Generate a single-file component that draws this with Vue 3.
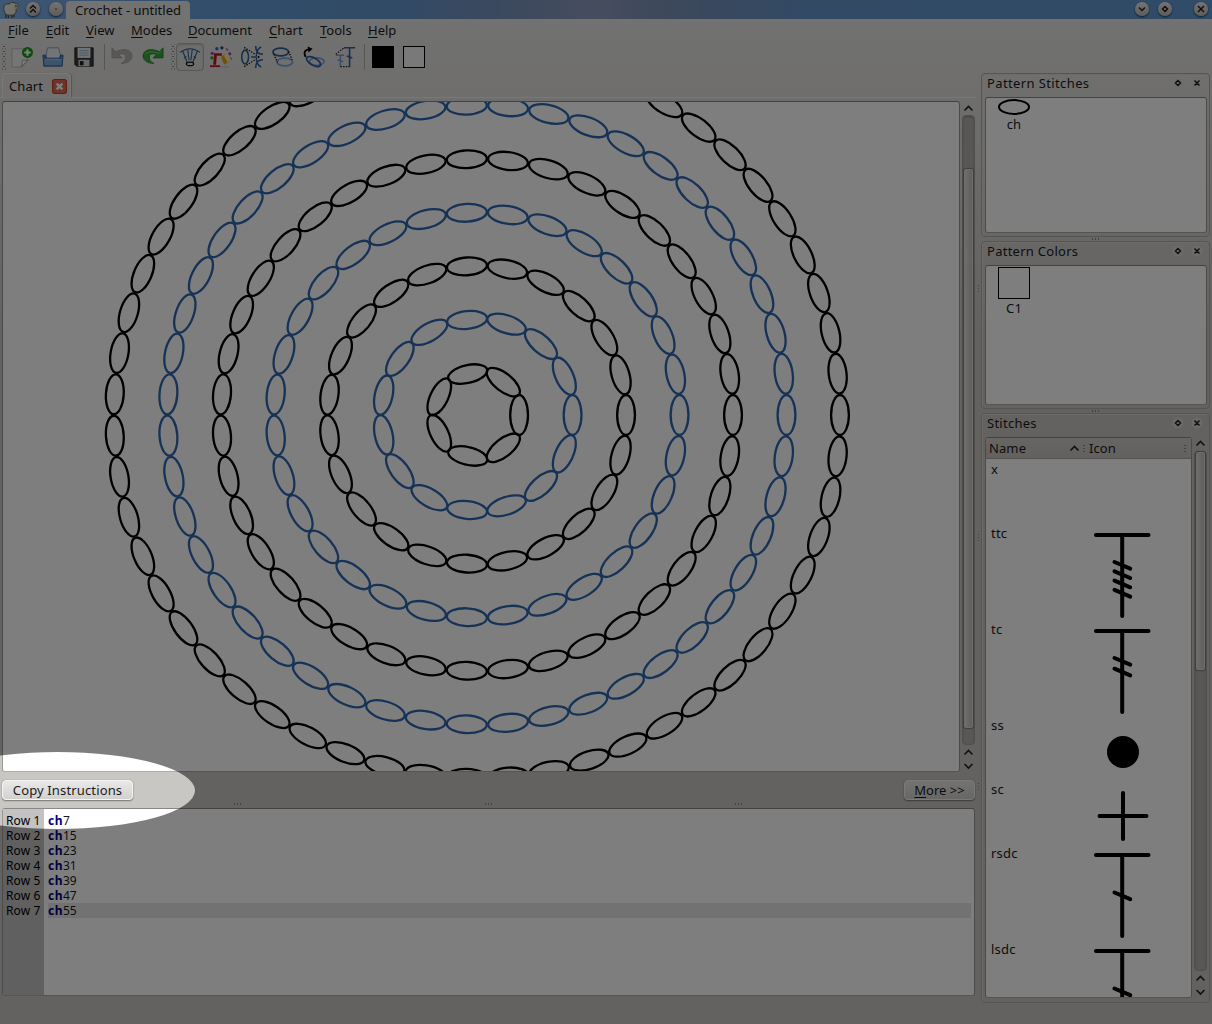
<script setup>
const menus = [
  { t: 'File', x: 22 }, { t: 'Edit', x: 24 }, { t: 'View', x: 29 }, { t: 'Modes', x: 41 },
  { t: 'Document', x: 65 }, { t: 'Chart', x: 35 }, { t: 'Tools', x: 32 }, { t: 'Help', x: 29 }
]
const rows = [7, 15, 23, 31, 39, 47, 55]
const rings = rows.map((n, i) => ({
  color: i % 2 ? '#2e68b0' : '#000',
  items: Array.from({ length: n }, (_, k) => ({ a: (k * 360) / n, r: 42 + i * 53.48 }))
}))
const stitches = [
  { name: 'x', h: 64, kind: 'none' },
  { name: 'ttc', h: 96, kind: 'T', ticks: [39, 48.3, 57.6, 66.9] },
  { name: 'tc', h: 96, kind: 'T', ticks: [39, 49.7] },
  { name: 'ss', h: 64, kind: 'dot' },
  { name: 'sc', h: 64, kind: 'plus' },
  { name: 'rsdc', h: 96, kind: 'T', ticks: [49.5] },
  { name: 'lsdc', h: 96, kind: 'T', ticks: [49.5] }
]
const paint = [[2, 13, '#3a9a3a'], [2.5, 8, '#a03fc0'], [7.5, 3, '#3a62c8'], [13, 2, '#2a3f9a'], [18, 4, '#a86fc8'], [21.5, 8.5, '#a03fc0'], [22.2, 14, '#8a9a3a']]
</script>

<template>
  <div class="window">
    <header class="title">
      <svg class="sheep" width="18" height="19" viewBox="0 0 18 19">
        <path d="M4 13v5M6.500 13v5M10 13v5M12 12v5" stroke="#5b5148" stroke-width="1.400" />
        <path d="M2 6q1-3 5-2 2-3 6-1 4 0 3 4-1 2-2 2 1 5-3 6-7 1-8-2-2-3-1-7z" fill="#e8e4da" stroke="#6e675e" />
        <path d="M13 4l3 2-1 3-3-1z" fill="#d8cdbb" /><circle cx="14" cy="6" r=".8" fill="#333" />
      </svg>
      <span class="orb o1"><svg width="14" height="14" viewBox="0 0 14 14"><path d="M4 6.500l3-3 3 3M4 10.500l3-3 3 3" /></svg></span>
      <span class="orb o2"><svg width="14" height="14" viewBox="0 0 14 14"><circle cx="7" cy="7" r=".2" /></svg></span>
      <span class="caption"><span>Crochet - untitled</span></span>
      <span class="grow"></span>
      <span class="orb"><svg width="14" height="14" viewBox="0 0 14 14"><path d="M4 5.500l3 3 3-3" /></svg></span>
      <span class="orb o4"><svg width="14" height="14" viewBox="0 0 14 14"><path d="M7 4.500L9.500 7 7 9.500 4.500 7z" /></svg></span>
      <span class="orb o5"><svg width="14" height="14" viewBox="0 0 14 14"><path d="M4 4l6 6M10 4l-6 6" /></svg></span>
    </header>

    <nav class="menu">
      <span v-for="m in menus" :key="m.t" :style="{ width: m.x + 'px' }"><u>{{ m.t[0] }}</u>{{ m.t.slice(1) }}</span>
    </nav>

    <div class="tools">
      <i class="handle"></i>
      <svg class="ic" viewBox="0 0 24 24">
        <path d="M1 3h17v13l-6 7H1z" fill="#ececec" stroke="#bbb" /><path d="M11.500 22.500l1-7h6z" fill="#fff" stroke="#888" stroke-width=".8" />
        <circle cx="18" cy="7" r="6" fill="#1c9a1c" /><path d="M18 3.500v7M14.500 7h7" stroke="#fff" stroke-width="2.200" />
      </svg>
      <svg class="ic" viewBox="0 0 24 24">
        <path d="M4 13L6 2h12l3 11z" fill="#e9eef5" stroke="#8496ad" /><path d="M1 10h3l1 4h14l1-4h3l-1 12H2z" fill="#4a7dbd" stroke="#2f609e" />
        <path d="M2 14h20l-1 7H3z" fill="#7ba6dc" /><path d="M4 15h16" stroke="#a8c8ee" />
      </svg>
      <svg class="ic" viewBox="0 0 24 24">
        <path d="M2 2h20v20H4l-2-2z" fill="#3c3c3e" stroke="#242424" /><path d="M5 2h14v11H5z" fill="#e6eaee" />
        <path d="M7 5h10M7 7.500h10M7 10h10" stroke="#8dafd0" /><path d="M6 15h12v7H6z" fill="#d3d3d3" /><path d="M7.500 16.500h4V21h-4z" fill="#222" />
      </svg>
      <i class="sep"></i>
      <svg class="ic undo" viewBox="0 0 24 24">
        <path d="M1 2v11h11L8 9q9-2 8 4 0 4-5 6 11 0 12-8Q22 3 12 4L5 6z" fill="#b4b3b0" stroke="#92918e" stroke-width=".7" />
      </svg>
      <svg class="ic redo" viewBox="0 0 24 24">
        <path d="M23 2v11H12l4-4Q7 7 8 13q0 4 5 6Q2 19 1 11 2 3 12 4l7 2z" fill="#38a83b" stroke="#167a22" stroke-width=".8" />
        <path d="M3 10q3-6 15-2l3-3" fill="none" stroke="#79d06e" />
      </svg>
      <i class="handle h2"></i>
      <span class="active"><svg class="ic" viewBox="0 0 24 24">
        <g fill="none" stroke="#2e5f9e" stroke-width="1.200"><path d="M1 7q11-8 22 0M4 5.500L9 18M20 5.500L15 18M9.500 3.500l1.500 12M14.500 3.500l-1.500 12M5.500 13l2.500-1.500M16 11.500l2.500 1.500" /></g>
        <ellipse cx="12" cy="19.500" rx="4" ry="2" fill="none" stroke="#111" stroke-width="1.300" />
      </svg></span>
      <svg class="ic paint" viewBox="0 0 24 24">
        <circle v-for="(p, i) in paint" :key="i" :cx="p[0]" :cy="p[1]" r="1.800" :fill="p[2]" />
        <path d="M8 9l9-6.500 6.500 13.500-9 6.500-6-3z" fill="#ece7dd" />
        <path d="M12 12l5-3.500 4.500 8-6 4z" fill="#e2a41a" /><path d="M15.200 10.300l2.200-1.500 4 7.200-2.200 1.500z" fill="#fff0b0" />
        <path d="M4.500 8h8.500v2.500H7.500l-1 10h-3z" fill="#b81c1c" />
        <path d="M0 22h11" stroke="#b81c1c" stroke-width="2" /><path d="M12 22.800h9" stroke="#bbb" />
      </svg>
      <svg class="ic" viewBox="0 0 24 24">
        <g fill="none" stroke="#2e5f9e" stroke-width="1.700"><ellipse cx="4.500" cy="12" rx="3.700" ry="7.500" /><path d="M16 0q0 9 8 9M24 15q-8 0-8 9M11 12h7M22 1q-5 3-5 8M22 23q-5-3-5-8" /></g>
        <path d="M3.500 1.500L20 12M3.500 22.500L20 12" fill="none" stroke="#111" stroke-width="1.400" stroke-dasharray="1.500 1.500" />
      </svg>
      <svg class="ic" viewBox="0 0 24 24">
        <g fill="none" stroke-width="1.900"><ellipse cx="14" cy="17.500" rx="8.500" ry="4.300" stroke="#79a4dc" /><ellipse cx="9.500" cy="6.500" rx="8.500" ry="4.300" stroke="#2e5f9e" /></g>
        <path d="M2 9l4 9M18 6l4 9" stroke="#111" stroke-width="1.500" stroke-dasharray="1.500 1.500" />
      </svg>
      <svg class="ic" viewBox="0 0 24 24">
        <g fill="none" stroke-width="1.900"><ellipse cx="15" cy="17" rx="8" ry="4" stroke="#79a4dc" /><ellipse cx="11.500" cy="17" rx="8.500" ry="4" transform="rotate(30 11.5 17)" stroke="#2e5f9e" /></g>
        <path d="M3 12Q-1 5 7 3.500" fill="none" stroke="#000" stroke-width="2" /><path d="M5 .5l5.500 2.500L6 7z" />
      </svg>
      <svg class="ic" viewBox="0 0 24 24">
        <g fill="none"><path d="M7 23V10M2 10h9M4 15l6 2" stroke="#6f9cd8" stroke-width="1.600" /><path d="M17 23V2M11 2h12M14 11l6 2" stroke="#2e5f9e" stroke-width="1.700" />
          <path d="M2 9l9-7M7 22.500h10" stroke="#111" stroke-width="1.300" stroke-dasharray="1.500 1.500" /></g>
      </svg>
      <i class="sep s2"></i>
      <b class="swatch black"></b><b class="swatch"></b>
    </div>

    <div class="body">
      <main class="left">
        <div class="tabs">
          <div class="tab">Chart<svg width="15" height="15" viewBox="0 0 14 14"><rect x=".5" y=".5" width="13" height="13" rx="2" fill="#dd6a50" stroke="#c23b27" /><path d="M4.300 4.300l5.400 5.400M9.700 4.300l-5.400 5.400" stroke="#fff" stroke-width="2.200" /></svg></div>
        </div>
        <div class="chartrow">
          <div class="canvas frame">
            <svg width="956" height="669" viewBox="3 102 956 669">
              <g v-for="(g, i) in rings" :key="i" :stroke="g.color" fill="none" stroke-width="2.300">
                <ellipse v-for="(e, k) in g.items" :key="k" :cx="477.100 + e.r" cy="415" rx="8.900" ry="20" :transform="`rotate(${e.a} 477.1 415)`" />
              </g>
            </svg>
          </div>
          <div class="scroll">
            <svg class="arr" width="13" height="14" viewBox="0 0 13 14"><path d="M2.500 9.500l4-4 4 4" /></svg>
            <div class="track"><div class="thumb t1"></div></div>
            <svg class="arr" width="13" height="14" viewBox="0 0 13 14"><path d="M2.500 9.500l4-4 4 4" /></svg>
            <svg class="arr" width="13" height="14" viewBox="0 0 13 14"><path d="M2.500 5l4 4 4-4" /></svg>
          </div>
        </div>
        <div class="buttons"><button class="copy">Copy Instructions</button><button class="more"><span><u>M</u>ore &gt;&gt;</span></button></div>
        <div class="split"><i></i><i></i><i></i></div>
        <div class="editor frame">
          <div class="gutter"><div v-for="(n, i) in rows" :key="n">Row {{ i + 1 }}</div></div>
          <div class="code"><div v-for="(n, i) in rows" :key="n" :class="{ current: i === 6 }"><b>ch</b><span>{{ n }}</span></div></div>
        </div>
      </main>

      <div class="vsplit"><i></i><i></i><i></i></div>

      <aside class="right">
        <section class="dock d1">
          <div class="dt"><span class="w102">Pattern Stitches</span><svg width="36" height="14" viewBox="0 0 36 14"><circle cx="8" cy="7" r="5.500" /><circle cx="27" cy="7" r="5.500" /><path d="M8 4.500L10.500 7 8 9.500 5.500 7zM24.500 4.500l5 5M29.500 4.500l-5 5" /></svg></div>
          <div class="box frame"><div class="cell"><svg width="34" height="18" viewBox="0 0 34 18"><ellipse cx="17" cy="9" rx="15" ry="6.900" fill="none" stroke="#000" stroke-width="2" /></svg><span>ch</span></div></div>
        </section>
        <div class="hs"><i></i></div>
        <section class="dock d2">
          <div class="dt"><span class="w91">Pattern Colors</span><svg width="36" height="14" viewBox="0 0 36 14"><circle cx="8" cy="7" r="5.500" /><circle cx="27" cy="7" r="5.500" /><path d="M8 4.500L10.500 7 8 9.500 5.500 7zM24.500 4.500l5 5M29.500 4.500l-5 5" /></svg></div>
          <div class="box frame"><div class="cell"><div class="c1"></div><span>C1</span></div></div>
        </section>
        <div class="hs"><i></i></div>
        <section class="dock d3">
          <div class="dt"><span class="w91">Stitches</span><svg width="36" height="14" viewBox="0 0 36 14"><circle cx="8" cy="7" r="5.500" /><circle cx="27" cy="7" r="5.500" /><path d="M8 4.500L10.500 7 8 9.500 5.500 7zM24.500 4.500l5 5M29.500 4.500l-5 5" /></svg></div>
          <div class="lrow">
            <div class="list frame">
              <div class="head"><span class="hn">Name</span><svg class="arr" width="13" height="14" viewBox="0 0 13 14"><path d="M2.500 9.500l4-4 4 4" /></svg><i></i><span class="hi">Icon</span><i></i></div>
              <div v-for="s in stitches" :key="s.name" class="item" :style="{ height: s.h + 'px' }">
                <span>{{ s.name }}</span>
                <svg width="64" :height="s.h" :viewBox="`0 0 64 ${s.h}`" stroke="#000" stroke-width="4" stroke-linecap="round" fill="none">
                  <template v-if="s.kind === 'T'"><path d="M6 12h52.500M32.200 12v81" /><path v-for="t in s.ticks" :key="t" :d="`M24.500 ${t}l15.700 6.700`" /></template>
                  <circle v-if="s.kind === 'dot'" cx="33" cy="37" r="14" fill="#000" />
                  <path v-if="s.kind === 'plus'" d="M33 14v46M9.500 37h47" />
                </svg>
              </div>
            </div>
            <div class="scroll sr">
              <svg class="arr" width="13" height="14" viewBox="0 0 13 14"><path d="M2.500 8.500l4-4 4 4" /></svg>
              <div class="track"><div class="thumb t2"></div></div>
              <svg class="arr" width="13" height="14" viewBox="0 0 13 14"><path d="M2.500 9.500l4-4 4 4" /></svg>
              <svg class="arr" width="13" height="14" viewBox="0 0 13 14"><path d="M2.500 5l4 4 4-4" /></svg>
            </div>
          </div>
        </section>
      </aside>
    </div>

    <svg class="shade" width="1212" height="1024" viewBox="0 0 1212 1024">
      <path fill-rule="evenodd" d="M0 0H1212V1024H0zM195 790.500A137.500 38.500 0 0 1 -80 790.500A137.500 38.500 0 0 1 195 790.500z" />
    </svg>
  </div>
</template>

<style>
body { margin: 0; }
</style>

<style scoped>
* { box-sizing: border-box; }
.window { position: relative; width: 1212px; height: 1024px; overflow: hidden; display: flex; flex-direction: column;
  background: linear-gradient(#e7e6e5 19px, #c9c7c3 330px, #c9c7c3); font: 13px/16px "Noto Sans", "Open Sans", sans-serif; color: #1c1c1c; }
.title { height: 19px; flex: none; display: flex; align-items: center; padding: 0 4px 0 2px;
  background: linear-gradient(90deg, #7cb0ea, #6ea4de 9%, #649cd4 22%, #6498ce 32%, #7a94be 42%, #8e9cbe 49%, #7a92ba 56%, #6696ca 66%, #629ad2); }
.grow { flex: 1; }
.orb { width: 14px; height: 14px; border-radius: 50%; background: linear-gradient(#ecebe8, #bdbbb7); box-shadow: 0 1px 2px #234; flex: none; margin-bottom: 1px; display: flex; }
.orb path, .orb circle { fill: none; stroke: #222; stroke-width: 1.500; }
.o1 { margin-left: 6px; } .o2 { margin-left: 9px; } .o4 { margin-left: 9px; } .o5 { margin-left: 22px; }
.o2 circle { stroke: #555; }
.caption { align-self: flex-end; width: 124px; height: 18px; margin-left: 3px; background: #e7e6e5; border-radius: 4px 4px 0 0; text-align: center; line-height: 18px; white-space: nowrap; }
.menu { height: 23px; flex: none; display: flex; padding: 3px 0 0 8px; white-space: nowrap; }
.menu span { margin-right: 16px; }
u { text-underline-offset: 2px; text-decoration-thickness: 1px; }
.tools { height: 29px; margin-bottom: 2px; flex: none; display: flex; align-items: center; padding-left: 2px; }
.ic { width: 22px; height: 22px; flex: none; margin-right: 9px; }
.handle { width: 4px; height: 26px; margin-right: 5px; background: radial-gradient(circle, #888 .8px, transparent 1px) 0 0/4px 5px, radial-gradient(circle, #888 .8px, transparent 1px) 2px 2.500px/4px 5px; flex: none; }
.sep { width: 1px; height: 26px; background: #b0aeaa; margin: 0 7px 0 0; flex: none; }
.undo { margin-left: -1px; margin-right: 10px; }
.redo { margin-left: -1px; margin-right: 7px; }
.h2 { margin: 0 1px 0 0; }
.active { width: 28px; height: 28px; border: 1px solid #b4b2af; border-radius: 4px; background: #dfdedc; padding: 2px; margin-right: 6px; flex: none; box-shadow: inset 0 1px 2px #bbb; }
.sep.s2 { margin: 0 7px 0 -1px; }
.swatch { width: 22px; height: 22px; border: 1px solid #000; background: #fff; margin-right: 9px; flex: none; }
.swatch:last-child { background: #f4f4f4; }
.black { background: #000; }
.body { flex: 1; min-height: 0; display: flex; }
.left { width: 976px; flex: none; display: flex; flex-direction: column; }
.tabs { height: 25px; border-bottom: 1px solid #f2f2f1; padding-left: 2px; flex: none; }
.tab { width: 69px; height: 24px; border: 1px solid #f4f4f3; border-bottom: 0; border-radius: 4px 4px 0 0; background: #e4e3e1; display: flex; align-items: center; padding: 1px 3px 0 6px; justify-content: space-between; box-shadow: 1px 0 1px #aaa; letter-spacing: .1px; }
.chartrow { height: 671px; display: flex; margin: 3px 0 0 2px; flex: none; }
.frame { border: 1px solid #8a8885; border-color: #8a8885 #9b9996 #aeaca8; border-radius: 3px; background: #fff; overflow: hidden; }
.canvas { width: 958px; height: 671px; }
.canvas svg { display: block; }
.scroll { width: 13px; margin-left: 2px; display: flex; flex-direction: column; flex: none; margin-bottom: -1px; }
.arr { flex: none; display: block; }
.arr path { fill: none; stroke: #222; stroke-width: 1.600; }
.track { flex: 1; min-height: 0; border-radius: 4px; background: #b3b1ad; border: 1px solid #a3a19e; box-shadow: inset 0 1px 2px #8a8885; }
.thumb { width: 9px; margin-left: 1px; border-radius: 2px; background: linear-gradient(90deg, #dcdbd8, #c4c2be); border: 1px solid #dedddb; box-shadow: 0 0 1px 1px #807e7b; }
.t1 { margin-top: 53px; height: 559px; }
.t2 { height: 218px; }
.buttons { height: 22px; margin-top: 8px; display: flex; justify-content: space-between; padding: 0 1px 0 2px; flex: none; }
button { font: inherit; color: inherit; height: 20px; border: 1px solid #f4f4f3; border-radius: 4px; background: linear-gradient(#e9e9e8, #d2d1ce); box-shadow: 0 1px 1.500px #777, 0 0 1px #888; padding: 0; line-height: 17px; white-space: nowrap; }
.copy { width: 131px; letter-spacing: .14px; } .more { width: 71px; }
.split { height: 6px; display: flex; justify-content: space-between; align-items: flex-start; padding: 1px 233px 0; flex: none; }
.split i, .vsplit i, .hs i { width: 9px; height: 2px; background: radial-gradient(circle, #8a8885 .7px, transparent 1px) 0 0/3px 2px; }
.editor { margin-left: 2px; width: 973px; height: 188px; display: flex; line-height: 15px; }
.gutter { width: 41px; background: #c3c3c3; padding: 4px 0 0 3px; font-size: 12px; white-space: nowrap; color: #000; letter-spacing: .1px; }
.gutter div { height: 15px; }
.code { flex: 1; padding: 4px 3px 0 4px; font-size: 12px; }
.code div { height: 15px; display: flex; }
.code b { color: #000080; line-height: 15px; letter-spacing: .5px; }
.current { background: #e6e6e6; }
.vsplit { width: 5px; display: flex; flex-direction: column; align-items: center; padding-top: 211px; gap: 240px; }
.vsplit i { width: 3px; height: 9px; background-size: 3px 3px; }
.right { width: 229px; flex: none; }
.dock { border: 1px solid #aeaca9; border-radius: 4px; box-shadow: inset 1px 1px 0 #dcdbd9; padding: 0 3px; width: 229px; }
.d1 { height: 164px; } .d2 { height: 168px; } .d3 { height: 590px; }
.hs { height: 4px; display: flex; justify-content: center; align-items: center; }
.dt { height: 23px; padding: 0 0 0 2px; display: flex; justify-content: space-between; align-items: center; }
.dt svg { flex: none; margin-top: -6px; margin-right: 0; }
.dt span { line-height: 18px; margin-top: -6px; }
.w102 { letter-spacing: .38px; } .w91 { letter-spacing: .27px; }
.dt circle { fill: #dedddb; opacity: .7; }
.dt path { fill: none; stroke: #222; stroke-width: 1.500; }
.box { width: 222px; }
.d1 .box { height: 136px; } .d2 .box { height: 140px; }
.cell { width: 34px; margin-left: 11px; display: flex; flex-direction: column; align-items: center; letter-spacing: .2px; }
.cell span { line-height: 16px; }
.c1 { width: 32px; height: 32px; border: 1px solid #000; margin: 1px 0 1px; }
.d2 .cell span { line-height: 17px; }
.lrow { display: flex; }
.list { width: 207px; height: 561px; flex: none; }
.head { height: 21px; background: linear-gradient(#cfcdc9, #c7c5c1); border-bottom: 1px solid #aaa8a5; display: flex; align-items: center; padding: 0 5px 0 3px; letter-spacing: .1px; }
.head i { width: 2px; height: 9px; background: radial-gradient(circle, #888 .7px, transparent 1px) 0 0/2px 3px; }
.head i:first-of-type { margin-left: 2px; }
.hn { flex: none; width: 79px; } .hi { flex: 1; margin-left: 4px; }
.item { display: flex; justify-content: space-between; padding: 0 37px 0 5px; color: #202020; }
.item span { line-height: 20px; letter-spacing: .2px; }
.item svg { flex: none; }
.sr { height: 562px; margin-left: 2px; }
.shade { position: absolute; left: 0; top: 0; fill: #000; opacity: .5; pointer-events: none; }
</style>
